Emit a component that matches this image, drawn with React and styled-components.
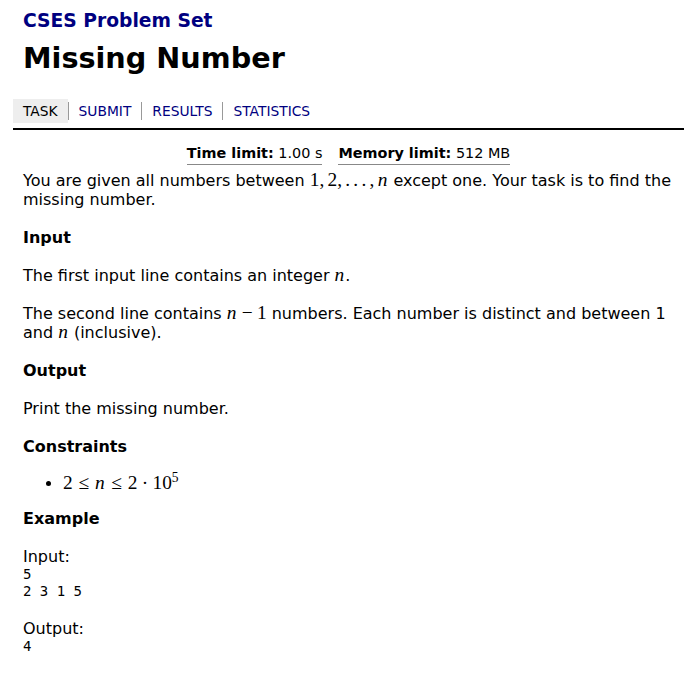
import styled, { createGlobalStyle } from "styled-components";

const Global = createGlobalStyle`
    body {
        margin: 0;
        background: #fff;
        color: #000;
        font-family: "DejaVu Sans", sans-serif;
    }
`
const Page = styled.div`
    padding-left: 13px;
`
const Header = styled.div`
    padding: 9px 10px 0 10px;
`
const SiteTitle = styled.div`
    color: #000080;
    font-weight: bold;
    font-size: 18.7px;
    line-height: 24px;
`
const Title = styled.h1`
    margin: 7px 0 0 0;
    font-size: 28.7px;
    line-height: 36px;
`
const Nav = styled.div`
    display: flex;
    align-items: center;
    margin-top: 23px;
    padding-bottom: 5px;
    border-bottom: 2px solid #000;
`
const Tab = styled.a`
    font-size: 13.8px;
    height: 24px;
    padding: 0 10px;
    display: flex;
    align-items: center;
    color: ${(p) => (p.current ? "#000" : "#000080")};
    background: ${(p) => (p.current ? "#eee" : "transparent")};
    text-decoration: none;
`
const Sep = styled.span`
    width: 1px;
    height: 18px;
    background: #999;
`
const Content = styled.div`
    padding: 0 10px;
    font-size: 16px;
    line-height: 19px;
`
const Limits = styled.div`
    display: flex;
    justify-content: center;
    gap: 16px;
    margin-top: 14px;
    font-size: 14.4px;
    line-height: 19px;
`
const Limit = styled.span`
    border-bottom: 1px solid #888;
    padding-bottom: 1px;
`
const Para = styled.p`
    margin: ${(p) => p.top || "19px"} 0 0 0;
`
const Heading = styled.h3`
    font-size: 16px;
    line-height: 19px;
    margin: ${(p) => p.top || "19px"} 0 0 0;
`
const Math = styled.span`
    font-family: "Liberation Serif", "DejaVu Serif", serif;
    font-size: 1.21em;
    line-height: 0;
    white-space: nowrap;
`
const V = styled.i`
    font-style: italic;
    padding-right: 0.05em;
`
const Rel = styled.span`
    margin: 0 0.3em;
`
const Bin = styled.span`
    margin: 0 0.222em;
`
const Punct = styled.span`
    margin-right: 0.167em;
`
const Dot = styled.span`
    margin-right: 0.17em;
`
const Sup = styled.sup`
    font-size: 0.7em;
    line-height: 0;
    vertical-align: 0.55em;
`
const List = styled.ul`
    margin: 18px 0 0 0;
    padding-left: 40px;
`
const Label = styled.div`
    margin-top: 19px;
`
const Code = styled.pre`
    margin: 0;
    font-family: "DejaVu Sans Mono", monospace;
    font-size: 14px;
    line-height: 17px;
`

function App() {
    const tabs = ["TASK", "SUBMIT", "RESULTS", "STATISTICS"];
    return (
        <Page>
            <Global />
            <Header>
                <SiteTitle>CSES Problem Set</SiteTitle>
                <Title>Missing Number</Title>
            </Header>
            <Nav>
                {tabs.flatMap((t, i) => [
                    i > 0 ? <Sep key={"s" + i} /> : null,
                    <Tab key={t} current={i === 0}>{t}</Tab>,
                ])}
            </Nav>
            <Content>
                <Limits>
                    <Limit><b>Time limit:</b> 1.00 s</Limit>
                    <Limit><b>Memory limit:</b> 512 MB</Limit>
                </Limits>
                <Para top="6px">
                    You are given all numbers between{" "}
                    <Math>1<Punct>,</Punct>2<Punct>,</Punct><Dot>.</Dot><Dot>.</Dot><Dot>.</Dot><Punct>,</Punct><V>n</V></Math>{" "}
                    except one. Your task is to find the missing number.
                </Para>
                <Heading>Input</Heading>
                <Para>The first input line contains an integer <Math><V>n</V></Math>.</Para>
                <Para>
                    The second line contains <Math><V>n</V><Bin>−</Bin>1</Math> numbers. Each number is distinct and between 1 and <Math><V>n</V></Math> (inclusive).
                </Para>
                <Heading>Output</Heading>
                <Para>Print the missing number.</Para>
                <Heading>Constraints</Heading>
                <List>
                    <li>
                        <Math>2<Rel>≤</Rel><V>n</V><Rel>≤</Rel>2<Bin>·</Bin>10<Sup>5</Sup></Math>
                    </li>
                </List>
                <Heading top="16px">Example</Heading>
                <Label>Input:</Label>
                <Code>{"5\n2 3 1 5"}</Code>
                <Label>Output:</Label>
                <Code>4</Code>
            </Content>
        </Page>
    );
}

export default App;
